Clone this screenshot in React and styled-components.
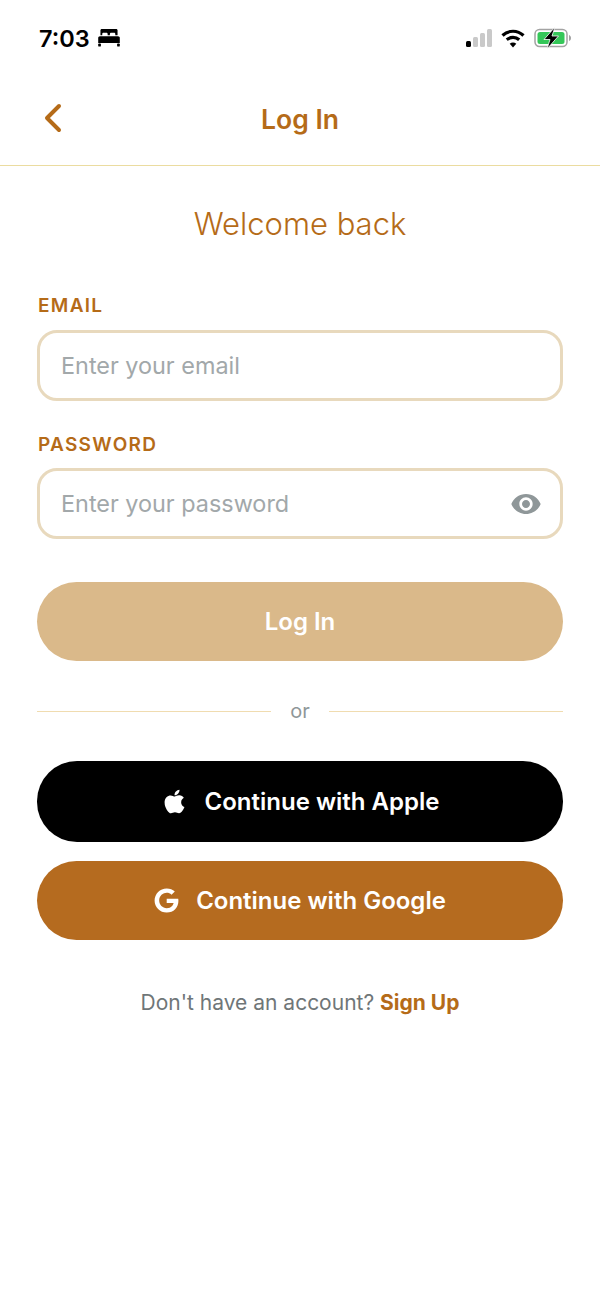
import React from "react";
import styled, { createGlobalStyle } from "styled-components";
import { FaApple, FaGoogle } from "react-icons/fa";
import { MdVisibility } from "react-icons/md";

const Global = createGlobalStyle`
  html, body { margin: 0; padding: 0; background: #fff; }
  * { box-sizing: border-box; }
  body { font-family: Inter, "Liberation Sans", sans-serif; }
`;

const Page = styled.div`
  width: 600px;
  height: 1299px;
  background: #fff;
  overflow: hidden;
`;

const StatusBar = styled.div`
  height: 76px;
  padding: 0 28px 0 39px;
  display: flex;
  align-items: center;
  justify-content: space-between;
`;

const TimeGroup = styled.div`
  display: flex;
  align-items: center;
  gap: 7px;
`;

const Time = styled.span`
  font-size: 23.500px;
  line-height: 29px;
  font-weight: 600;
  color: #000;
`;

const StatusIcons = styled.div`
  display: flex;
  align-items: center;
  gap: 9px;
`;

const Header = styled.header`
  height: 90px;
  padding: 0 0 3px 37px;
  display: flex;
  align-items: center;
  justify-content: center;
  position: relative;
  border-bottom: 1px solid #ebdca0;
`;

const BackButton = styled.div`
  position: absolute;
  left: 42px;
  top: 26px;
  display: flex;
`;

const Title = styled.h1`
  margin: 0 37px 0 0;
  font-size: 26.500px;
  line-height: 30px;
  font-weight: 600;
  color: #b56b18;
`;

const Content = styled.main`
  padding: 0 37px;
  display: flex;
  flex-direction: column;
`;

const Welcome = styled.h2`
  margin: 39px 0 0;
  text-align: center;
  font-size: 31px;
  line-height: 38px;
  font-weight: 300;
  color: #b56b18;
`;

const Label = styled.label`
  display: block;
  margin-top: ${(p) => p.$top}px;
  padding-left: 1px;
  font-size: 19px;
  line-height: 22px;
  font-weight: 600;
  letter-spacing: 1.300px;
  color: #b56b18;
`;

const Field = styled.div`
  margin-top: ${(p) => p.$top}px;
  height: 71px;
  border: 3px solid #e8d9bd;
  border-radius: 20px;
  padding: 0 21px;
  display: flex;
  align-items: center;
  justify-content: space-between;
  background: #fff;
`;

const Input = styled.input`
  flex: 1;
  min-width: 0;
  border: 0;
  outline: 0;
  padding: 0;
  background: transparent;
  font-family: inherit;
  font-size: 23.400px;
  color: #333;
  &::placeholder { color: #a2a8aa; opacity: 1; }
`;

const EyeButton = styled.div`
  display: flex;
  color: #8f9799;
  margin-right: -3px;
`;

const PillButton = styled.div`
  margin-top: ${(p) => p.$top}px;
  height: ${(p) => p.$height}px;
  border-radius: 40px;
  background: ${(p) => p.$bg};
  color: #fff;
  font-size: 24px;
  font-weight: 600;
  display: flex;
  align-items: center;
  justify-content: center;
  gap: ${(p) => p.$gap || 0}px;
`;

const Divider = styled.div`
  margin-top: 37px;
  height: 26px;
  display: flex;
  align-items: center;
  gap: 19px;
  color: #8f9799;
  font-size: 20px;
`;

const Rule = styled.span`
  flex: 1;
  height: 1px;
  background: #f0dcb0;
`;

const Footer = styled.p`
  margin: 50px 0 0;
  text-align: center;
  font-size: 21px;
  line-height: 26px;
  color: #6f7678;
`;

const SignUp = styled.span`
  font-weight: 700;
  color: #b56b18;
`;

const Bed = () => (
  <svg width="24" height="18" viewBox="0 0 25 20" fill="#000">
    <path d="M3 1.500C3 .7 3.700 0 4.500 0h16c.8 0 1.500.7 1.500 1.500V7h-2.500V5.800c0-.9-.6-1.500-1.500-1.500h-3c-.9 0-1.500.6-1.500 1.500V7h-2.500V5.800c0-.9-.6-1.500-1.500-1.500h-3c-.9 0-1.500.6-1.500 1.500V7H3z" />
    <path d="M2.500 8h20c1.200 0 2 .8 2 2v5.500H.5V10c0-1.200.8-2 2-2z" />
    <rect x="0.500" y="16" width="3" height="3.500" rx="1" />
    <rect x="21.500" y="16" width="3" height="3.500" rx="1" />
  </svg>
);

const Signal = () => (
  <svg width="26" height="18" viewBox="0 0 26 18">
    <rect x="0" y="12" width="5" height="6" rx="1.500" fill="#000" />
    <rect x="7" y="8" width="5" height="10" rx="1.500" fill="#c9c9c9" />
    <rect x="14" y="4" width="5" height="14" rx="1.500" fill="#c9c9c9" />
    <rect x="21" y="0" width="5" height="18" rx="1.500" fill="#c9c9c9" />
  </svg>
);

const Wifi = () => (
  <svg width="24" height="19" viewBox="0 0 24 19" fill="none" stroke="#000" strokeWidth="3.200">
    <path d="M1.500 6.500C7.500 .8 16.500 .8 22.500 6.500" />
    <path d="M5.800 10.800c3.600-3.300 8.800-3.300 12.400 0" />
    <path d="M12 18.500l-3.300-3.700c1.900-1.600 4.700-1.600 6.600 0z" fill="#000" stroke="none" />
  </svg>
);

const Battery = () => (
  <svg width="38" height="22" viewBox="0 0 38 22">
    <rect x="1" y="2.500" width="32" height="17" rx="4.500" fill="#fff" stroke="#a3a3a3" strokeWidth="1.500" />
    <rect x="3.500" y="5" width="27" height="12" rx="2.500" fill="#35c759" />
    <path d="M35 8v6c1.300-.5 2-1.500 2-3s-.7-2.500-2-3z" fill="#a3a3a3" />
    <path d="M21 0L10 12.500h6L13 22l11.500-13h-6.500z" fill="#000" stroke="#fff" strokeWidth=".8" />
  </svg>
);

const Chevron = () => (
  <svg width="20" height="32" viewBox="0 0 20 32" fill="none" stroke="#b56b18" strokeWidth="4" strokeLinecap="round" strokeLinejoin="round">
    <path d="M17 4L5 16l12 12" />
  </svg>
);

export default function App() {
  return (
    <Page>
      <Global />
      <StatusBar>
        <TimeGroup>
          <Time>7:03</Time>
          <Bed />
        </TimeGroup>
        <StatusIcons>
          <Signal />
          <Wifi />
          <Battery />
        </StatusIcons>
      </StatusBar>
      <Header>
        <BackButton><Chevron /></BackButton>
        <Title>Log In</Title>
      </Header>
      <Content>
        <Welcome>Welcome back</Welcome>
        <Label $top={52}>EMAIL</Label>
        <Field $top={13}><Input placeholder="Enter your email" /></Field>
        <Label $top={33}>PASSWORD</Label>
        <Field $top={12}>
          <Input placeholder="Enter your password" />
          <EyeButton><MdVisibility size={32} /></EyeButton>
        </Field>
        <PillButton $top={43} $height={79} $bg="#dab98a">Log In</PillButton>
        <Divider><Rule />or<Rule /></Divider>
        <PillButton $top={37} $height={81} $bg="#000" $gap={17}><FaApple size={27} />Continue with Apple</PillButton>
        <PillButton $top={19} $height={79} $bg="#b56b1f" $gap={17}><FaGoogle size={25} />Continue with Google</PillButton>
        <Footer>Don't have an account? <SignUp>Sign Up</SignUp></Footer>
      </Content>
    </Page>
  );
}
